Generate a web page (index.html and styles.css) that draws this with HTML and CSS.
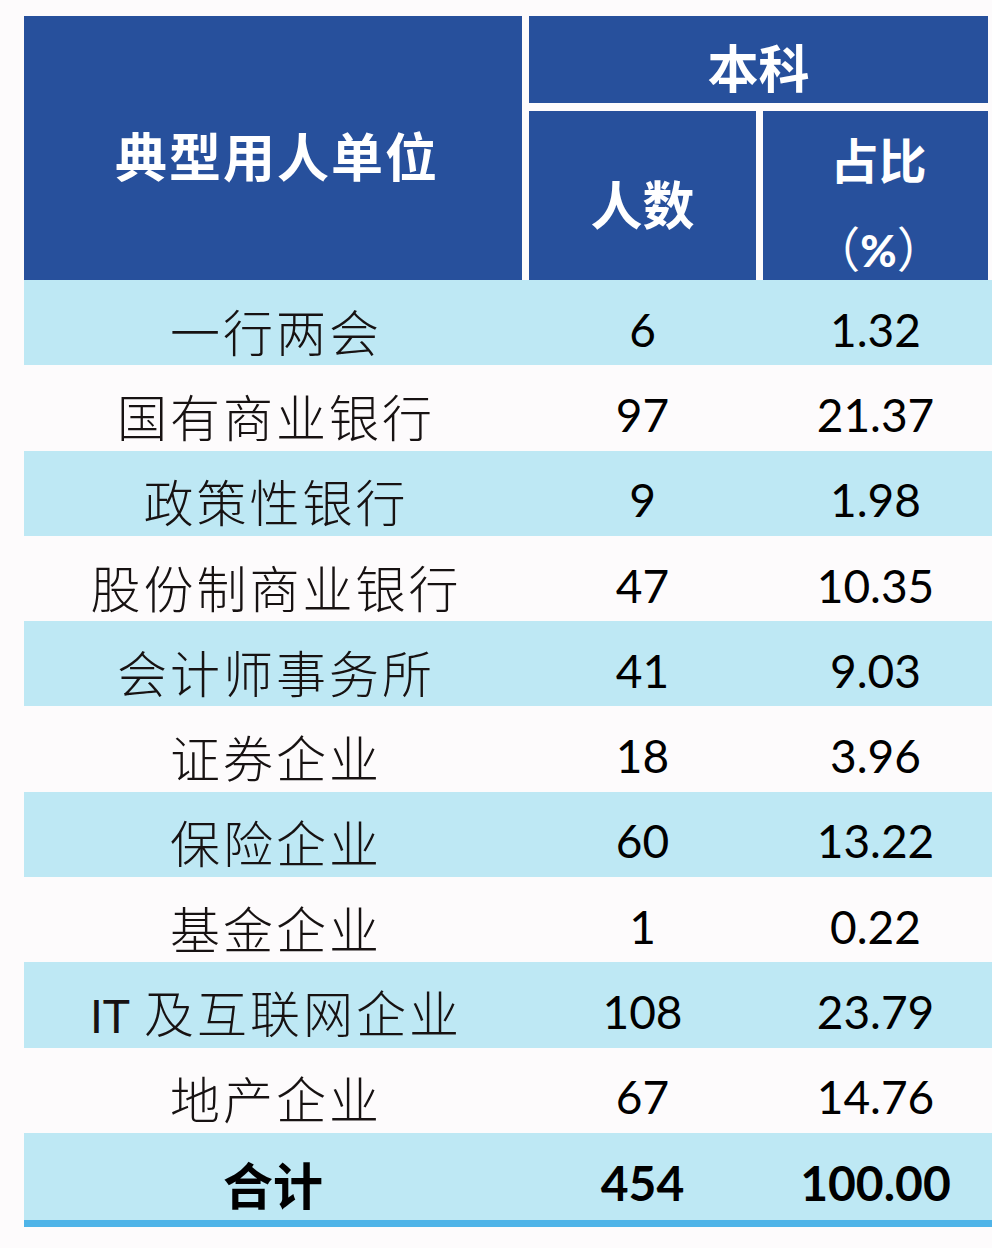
FILE: index.html
```html
<!DOCTYPE html>
<html lang="zh-CN">
<head>
<meta charset="utf-8">
<title>典型用人单位</title>
<link rel="stylesheet" href="styles.css">
</head>
<body>
<div class="table">
  <div class="head">
    <div class="hcell unit">典型用人单位</div>
    <div class="hcell level">本科</div>
    <div class="hcell count">人数</div>
    <div class="hcell pct"><span>占比</span><span class="paren">（<b>%</b>）</span></div>
  </div>
  <div class="row alt"><div class="name">一行两会</div><div class="num">6</div><div class="num">1.32</div></div>
  <div class="row"><div class="name">国有商业银行</div><div class="num">97</div><div class="num">21.37</div></div>
  <div class="row alt"><div class="name">政策性银行</div><div class="num">9</div><div class="num">1.98</div></div>
  <div class="row"><div class="name">股份制商业银行</div><div class="num">47</div><div class="num">10.35</div></div>
  <div class="row alt"><div class="name">会计师事务所</div><div class="num">41</div><div class="num">9.03</div></div>
  <div class="row"><div class="name">证券企业</div><div class="num">18</div><div class="num">3.96</div></div>
  <div class="row alt"><div class="name">保险企业</div><div class="num">60</div><div class="num">13.22</div></div>
  <div class="row"><div class="name">基金企业</div><div class="num">1</div><div class="num">0.22</div></div>
  <div class="row alt"><div class="name"><span class="latin">IT</span> 及互联网企业</div><div class="num">108</div><div class="num">23.79</div></div>
  <div class="row"><div class="name">地产企业</div><div class="num">67</div><div class="num">14.76</div></div>
  <div class="row alt total"><div class="name">合计</div><div class="num">454</div><div class="num">100.00</div></div>
</div>
</body>
</html>
```
FILE: styles.css
```css
html, body {
  margin: 0;
  padding: 0;
  background: #fdfbfc;
}

body {
  overflow: hidden;
}

.table {
  margin: 16px 0 0 24px;
  width: 968px;
}

.head {
  display: grid;
  grid-template-columns: 498px 227px 225px;
  grid-template-rows: 87px 169px;
  gap: 8px 7px;
  padding-right: 4px;
  background: #fdfbfc;
}

.hcell {
  background: #27509c;
  color: #ffffff;
  font-family: "Noto Sans CJK SC", "Noto Sans", sans-serif;
  font-weight: 700;
  display: flex;
  flex-direction: column;
  align-items: center;
  justify-content: center;
  line-height: 1;
  padding-top: 14px;
  box-sizing: border-box;
}

.unit {
  grid-row: 1 / 3;
  grid-column: 1;
  font-size: 52px;
  letter-spacing: 2px;
  padding-left: 8px;
}

.level {
  grid-row: 1;
  grid-column: 2 / 4;
  font-size: 51px;
}

.count {
  grid-row: 2;
  grid-column: 2;
  font-size: 52px;
}

.pct {
  grid-row: 2;
  grid-column: 3;
  font-size: 48px;
  gap: 40px;
  padding-left: 6px;
}

.pct .paren {
  font-weight: 400;
}

.pct .paren b {
  font-family: "Lato", "Noto Sans", sans-serif;
  font-weight: 900;
  font-size: 44px;
}

.row {
  display: grid;
  grid-template-columns: 498px 227px 225px;
  column-gap: 7px;
  padding-right: 4px;
  height: 85.3px;
  align-items: center;
  background: #fdfbfc;
  color: #171212;
}

.row.alt {
  background: #bee8f4;
}

.name {
  text-align: center;
  font-family: "Noto Sans CJK SC", sans-serif;
  font-weight: 300;
  font-size: 50px;
  letter-spacing: 3px;
  line-height: 1;
  padding-top: 14px;
  padding-left: 6px;
}

.latin {
  font-family: "Lato", "Noto Sans", sans-serif;
  font-weight: 400;
  font-size: 46px;
  letter-spacing: 0;
}

.num {
  text-align: center;
  font-family: "Lato", "Noto Sans", sans-serif;
  font-size: 46px;
  line-height: 1;
  padding-top: 14px;
  color: #000000;
}

.row.total {
  height: 87px;
  border-bottom: 7px solid #4fb4e8;
}

.total .name {
  font-weight: 700;
  letter-spacing: 0;
  padding-left: 0;
  color: #000000;
}

.total .num {
  font-weight: 700;
  font-size: 48px;
}
```
